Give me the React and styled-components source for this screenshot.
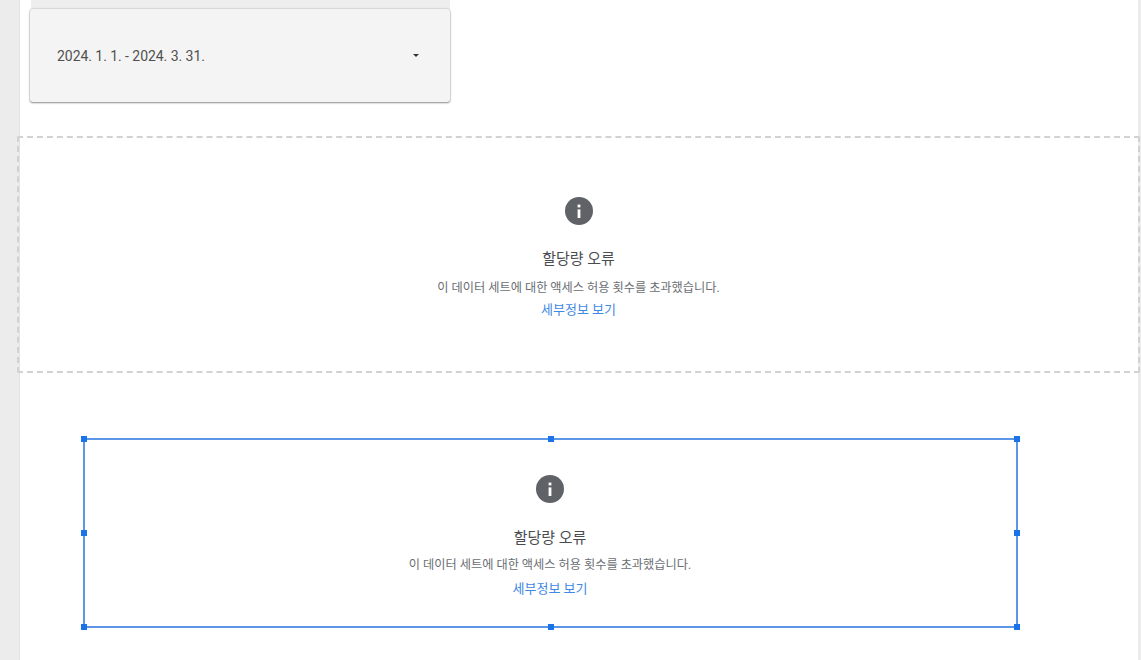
import React from "react";
import styled, { createGlobalStyle } from "styled-components";

const GlobalStyle = createGlobalStyle`
  html, body {
    margin: 0;
    padding: 0;
    height: 660px;
    overflow: hidden;
    background: #ffffff;
  }
`;

const Page = styled.div`
  width: 1141px;
  height: 660px;
  display: flex;
  overflow: hidden;
  background: #ececec;
  font-family: "Roboto", "Noto Sans CJK KR", sans-serif;
`;

const Canvas = styled.div`
  width: 1119px;
  margin: 0 3px 0 19px;
  height: 660px;
  background: #ffffff;
  border-left: 1px solid #e2e2e2;
  box-sizing: border-box;
`;

const TopCard = styled.div`
  width: 419px;
  height: 9px;
  margin-left: 11px;
  background: #eeeeee;
`;

const SelectCard = styled.div`
  width: 420px;
  height: 93px;
  margin-left: 10px;
  padding: 0 31px 0 27px;
  box-sizing: border-box;
  display: flex;
  align-items: center;
  justify-content: space-between;
  background: #f4f4f4;
  border-radius: 3px;
  box-shadow: 0 0 2px rgba(0, 0, 0, 0.28), 0 1px 2px rgba(0, 0, 0, 0.4);
`;

const DateText = styled.span`
  font-size: 14px;
  letter-spacing: -0.05px;
  color: #505050;
`;

const Caret = styled.span`
  width: 0;
  height: 0;
  border-left: 3px solid transparent;
  border-right: 3px solid transparent;
  border-top: 3px solid #333333;
`;

const DashedBox = styled.div`
  width: 1123px;
  height: 237px;
  margin: 34px 0 0 -3px;
  padding-top: 59px;
  box-sizing: border-box;
  border: 2px dashed #d2d2d2;
  border-radius: 2px;
`;

const SelectedBox = styled.div`
  position: relative;
  width: 935px;
  height: 190px;
  margin: 65px 0 0 63px;
  padding: 35px 1px 0 0;
  box-sizing: border-box;
  border: 2px solid #5b97e6;
`;

const Handle = styled.span`
  position: absolute;
  width: 6px;
  height: 6px;
  background: #1a73e8;
  left: calc(${(p) => p.$x} * (100% + 2px) - 1px);
  top: calc(${(p) => p.$y} * (100% + 2px) - 1px);
  transform: translate(-50%, -50%);
`;

const Message = styled.div`
  display: flex;
  flex-direction: column;
  align-items: center;
`;

const InfoIcon = styled.svg`
  width: 28px;
  height: 28px;
  display: block;
`;

const Title = styled.div`
  margin-top: ${(p) => p.$gap}px;
  font-size: 15px;
  line-height: 20px;
  color: #4a4d50;
`;

const Description = styled.div`
  margin-top: ${(p) => p.$gap}px;
  font-size: 12.2px;
  line-height: 16px;
  color: #6a6e72;
`;

const DetailLink = styled.a`
  margin-top: ${(p) => p.$gap}px;
  font-size: 13px;
  line-height: 16px;
  color: #3f88e4;
  text-decoration: none;
`;

const handles = [
  [0, 0],
  [0.5, 0],
  [1, 0],
  [0, 0.5],
  [1, 0.5],
  [0, 1],
  [0.5, 1],
  [1, 1],
];

const QuotaError = ({ titleGap, descGap, linkGap }) => (
  <Message>
    <InfoIcon viewBox="0 0 28 28">
      <circle cx="14" cy="14" r="14" fill="#5f6368" />
      <rect x="12.6" y="12.4" width="2.8" height="8.6" fill="#ffffff" />
      <rect x="12.6" y="7.6" width="2.8" height="2.8" fill="#ffffff" />
    </InfoIcon>
    <Title $gap={titleGap}>할당량 오류</Title>
    <Description $gap={descGap}>
      이 데이터 세트에 대한 액세스 허용 횟수를 초과했습니다.
    </Description>
    <DetailLink href="#" $gap={linkGap}>
      세부정보 보기
    </DetailLink>
  </Message>
);

const App = () => {
  return (
    <Page>
      <GlobalStyle />
      <Canvas>
        <TopCard />
        <SelectCard>
          <DateText>2024. 1. 1. - 2024. 3. 31.</DateText>
          <Caret />
        </SelectCard>
        <DashedBox>
          <QuotaError titleGap={24} descGap={11} linkGap={6} />
        </DashedBox>
        <SelectedBox>
          {handles.map(([x, y]) => (
            <Handle key={`${x}-${y}`} $x={x} $y={y} />
          ))}
          <QuotaError titleGap={25} descGap={9} linkGap={8} />
        </SelectedBox>
      </Canvas>
    </Page>
  );
};

export default App;
